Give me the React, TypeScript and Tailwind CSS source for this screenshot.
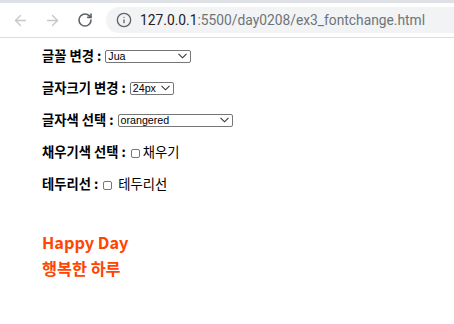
import { ArrowLeft, ArrowRight, RotateCw, Info } from "lucide-react";

function FakeSelect({ value, width }: { value: string; width: string }) {
  return (
    <div className={`${width} h-[13px] border border-[#767676] rounded-[2px] bg-white flex items-center justify-between pl-[2px] pr-[3px]`}>
      <span className="text-[10.7px] leading-none text-black font-['Liberation_Sans',Arial,sans-serif]">{value}</span>
      <svg width="9" height="6" viewBox="0 0 9 6" className="shrink-0">
        <path d="M0.5 0.8 L4.5 4.8 L8.5 0.8" fill="none" stroke="#333" strokeWidth="1.1" />
      </svg>
    </div>
  );
}

function Checkbox() {
  return <span className="inline-block w-[9px] h-[9px] border border-[#767676] rounded-[2px] bg-white shrink-0" />;
}

export default function App() {
  const label = "font-bold text-[13.3px] text-black font-['Noto_Sans_CJK_KR',sans-serif] leading-none";

  return (
    <div className="w-[454px] h-[324px] bg-white overflow-hidden">
      {/* Browser toolbar */}
      <div className="border-t-[3px] border-[#dee1e6] border-b border-b-[#dadce0] h-[38px] flex items-center bg-white">
        <div className="w-[106px] shrink-0 flex items-center pl-[12px] gap-[15px]">
          <ArrowLeft className="w-[17px] h-[17px] text-[#c4c6c9]" strokeWidth={1.8} />
          <ArrowRight className="w-[17px] h-[17px] text-[#c4c6c9]" strokeWidth={1.8} />
          <RotateCw className="w-[16px] h-[16px] text-[#5f6368] ml-[1px]" strokeWidth={2.4} />
        </div>
        <div className="flex-1 h-[26px] bg-[#f1f3f4] rounded-l-full flex items-center pl-[10px]">
          <Info className="w-[16px] h-[16px] text-[#5f6368] shrink-0" strokeWidth={2} />
          <span className="ml-[8px] text-[13.8px] font-['Roboto',sans-serif] whitespace-nowrap">
            <span className="text-[#202124]">127.0.0.1</span>
            <span className="text-[#6f7378]">:5500/day0208/ex3_fontchange.html</span>
          </span>
        </div>
      </div>

      {/* Page */}
      <div className="pl-[42px] pt-[2px]">
        <div className="h-8 flex items-center gap-[4px]">
          <span className={label}>글꼴 변경 :</span>
          <FakeSelect value="Jua" width="w-[86px]" />
        </div>
        <div className="h-8 flex items-center gap-[4px]">
          <span className={label}>글자크기 변경 :</span>
          <FakeSelect value="24px" width="w-[44px]" />
        </div>
        <div className="h-8 flex items-center gap-[4px]">
          <span className={label}>글자색 선택 :</span>
          <FakeSelect value="orangered" width="w-[115px]" />
        </div>
        <div className="h-8 flex items-center">
          <span className={label}>채우기색 선택 :</span>
          <span className="ml-[5px]"><Checkbox /></span>
          <span className="ml-[3px] text-[13.3px] leading-none font-['Noto_Sans_CJK_KR',sans-serif] text-black">채우기</span>
        </div>
        <div className="h-8 flex items-center">
          <span className={label}>테두리선 :</span>
          <span className="ml-[5px]"><Checkbox /></span>
          <span className="ml-[6px] text-[13.3px] leading-none font-['Noto_Sans_CJK_KR',sans-serif] text-black">테두리선</span>
        </div>

        <div className="mt-[29px] text-[#ff4500] text-[16.3px] leading-[26px] font-bold font-['Noto_Sans_CJK_KR',sans-serif]">
          <div>Happy Day</div>
          <div>행복한 하루</div>
        </div>
      </div>
    </div>
  );
}
